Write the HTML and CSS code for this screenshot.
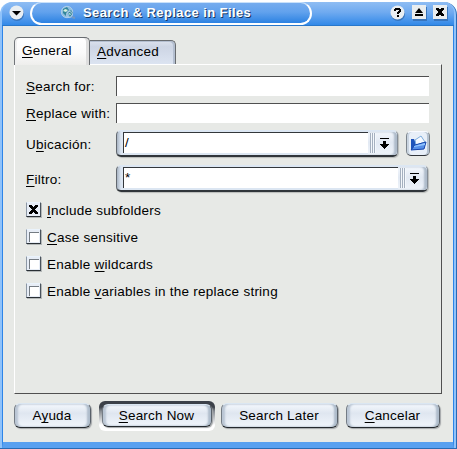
FILE: index.html
```html
<!DOCTYPE html>
<html lang="es">
<head>
<meta charset="utf-8">
<title>Search &amp; Replace in Files</title>
<link rel="stylesheet" href="styles.css">
</head>
<body>
<main class="window">
  <header class="titlebar">
    <svg class="round-button" width="16" height="17" viewBox="0 0 16 17"><circle cx="8" cy="9" r="7" fill="#3875bd"/><circle cx="7.5" cy="7.5" r="7" fill="#e9eef2"/><path d="M3 6h9L7.5 10.5z" fill="#000"/></svg>
    <div class="title-pill">
      <svg width="16" height="16" viewBox="0 0 16 16"><circle cx="7" cy="7" r="5.7" fill="#8bbce0" stroke="#aecfe9"/><path d="M3 4l4-2 2 3-2 2-1 4-3-3zM8 8l3-3 2 3-3 4z" fill="#32869b"/><path d="M3 6l2-2 3 1-2 2zM8 9l2-1 1 2" fill="#d8f2df"/><circle cx="9.5" cy="9.5" r="3" fill="none" stroke="#b2cce4"/><path d="M12 12l3 1" stroke="#7498c2" stroke-width="2"/></svg>
      <h1>Search &amp; Replace in Files</h1>
    </div>
    <div class="controls">
      <svg width="16" height="17" viewBox="0 0 16 17"><circle cx="8" cy="9" r="7" fill="#3875bd"/><circle cx="7.5" cy="7.5" r="7" fill="#e9eef2"/><path d="M4 6V4h1V3h5v1h1v3h-1v1H9v1H7V7h1V6h1V5H6v1zM7 10h2v2H7z" fill="#000"/></svg>
      <svg width="16" height="17" viewBox="0 0 16 17"><path d="M2 2h14v14H2z" fill="#3875bd"/><path d="M1 0h14v14H1z" fill="#e9edef"/><path d="M4 8l4-5 4 5zM4 9h8v2H4z" fill="#000"/></svg>
      <svg width="16" height="17" viewBox="0 0 16 17"><path d="M2 2h14v14H2z" fill="#3875bd"/><path d="M1 0h14v14H1z" fill="#e9edef"/><path d="M4 3h3v1h2V3h3v2h-1v1h-1v2h1v1h1v2H9v-1H7v1H4V9h1V8h1V6H5V5H4z" fill="#000"/></svg>
    </div>
  </header>
  <section class="content">
    <nav class="tabs">
      <span class="tab active"><u>G</u>eneral</span>
      <span class="tab"><u>A</u>dvanced</span>
    </nav>
    <div class="panel">
      <div class="row search"><label><u>S</u>earch for:</label><div class="field"></div></div>
      <div class="row replace"><label><u>R</u>eplace with:</label><div class="field"></div></div>
      <div class="row location">
        <label>U<u>b</u>icación:</label>
        <div class="combo"><div class="value">/</div><div class="drop"><i class="grip"></i><svg width="9" height="11" viewBox="0 0 9 11"><path d="M0 0h9v1H0zM3 3h3v3h3v1H8v1H7v1H6v1H5v1H4v-1H3V9H2V8H1V7H0V6h3z"/></svg></div></div>
        <div class="folder"><svg width="17" height="16" viewBox="0 0 17 16"><path d="M1 15V4h3l1 2h9v8z" fill="#1e54bb"/><path d="M5 5l6-4 4 6-9 3z" fill="#f5f9ff" stroke="#7daddd"/><path d="M1 15l4-5 11-3-2 7z" fill="#568fe9" stroke="#1646ad"/><path d="M4 11l11-3v2L4 12z" fill="#91c4ff"/></svg></div>
      </div>
      <div class="row filter">
        <label><u>F</u>iltro:</label>
        <div class="combo"><div class="value">*</div><div class="drop"><i class="grip"></i><svg width="9" height="11" viewBox="0 0 9 11"><path d="M0 0h9v1H0zM3 3h3v3h3v1H8v1H7v1H6v1H5v1H4v-1H3V9H2V8H1V7H0V6h3z"/></svg></div></div>
      </div>
      <div class="checks">
        <label class="check"><i class="box"><svg width="9" height="9" viewBox="0 0 9 9"><path d="M0 0h3v1h1v1h1V1h1V0h3v2H8v1H7v1H6v1h1v1h1v1h1v2H6V8H5V7H4v1H3v1H0V7h1V6h1V5h1V4H2V3H1V2H0z"/></svg></i><span><u>I</u>nclude subfolders</span></label>
        <label class="check"><i class="box empty"></i><span><u>C</u>ase sensitive</span></label>
        <label class="check"><i class="box empty"></i><span>Enable <u>w</u>ildcards</span></label>
        <label class="check"><i class="box empty"></i><span>Enable <u>v</u>ariables in the replace string</span></label>
      </div>
    </div>
    <footer class="actions">
      <button class="help-button">A<u>y</u>uda</button>
      <div class="default"><button><u>S</u>earch Now</button></div>
      <button class="later">Search Later</button>
      <button class="cancel"><u>C</u>ancelar</button>
    </footer>
  </section>
</main>
</body>
</html>
```
FILE: styles.css
```css
* { box-sizing: border-box; }
body {
  margin: 0; width: 457px; height: 449px; overflow: hidden; background: #fff;
  font: 13.5px/16px "Liberation Sans", sans-serif; letter-spacing: .25px; color: #000;
}
svg { display: block; flex: none; }
u { text-decoration-thickness: 1px; text-underline-offset: 2px; text-decoration-skip-ink: none; }
.window {
  width: 457px; height: 447px; margin-top: 2px; padding: 0 2px 0 2px;
  background: #8fc2fa; border-right: 1px solid #286bb4; border-bottom: 1px solid #286bb4;
  border-radius: 12px 13px 0 0;
}
.titlebar {
  height: 24px; display: flex; background: linear-gradient(#8fbdf3, #6faaf0 45%, #3289e8);
  border-bottom: 1px solid #2777cb; border-radius: 11px 11px 0 0;
}
.round-button { margin: 3px 0 0 7px; }
.title-pill {
  width: 282px; height: 23px; margin-left: 5px; padding: 2px 0 0 28px;
  display: flex; border: 2px solid #fff; border-top: 1px solid #c9e1fa; border-radius: 12px;
  background: linear-gradient(#76acee, #62a2ed 45%, #2c82e2);
}
h1 {
  margin: 1px 0 0 7px; font-size: 13px; line-height: 14px; letter-spacing: .4px;
  color: #fff; text-shadow: 1px 1px #17365d; white-space: nowrap;
}
.controls { display: flex; gap: 5px; margin: 3px 0 0 78px; }
.content {
  height: 422px; padding: 11px 11px 6px 11px;
  background: #e7e9e6; border-left: 1px solid #2c84e8; border-right: 1px solid #2c84e8;
  border-bottom: 6px solid #58a0f0;
}
.tabs { height: 27px; display: flex; align-items: flex-end; }
.tab {
  width: 86px; height: 24px; padding: 3px 0 0 7px; border: 1px solid #686c70; border-left: 0;
  border-bottom: 0; border-radius: 0 5px 0 0;
  background: linear-gradient(#dce2ed, #cdd5e4 25%, #dce4f1);
  box-shadow: inset -2px 1px #b4bfd0;
}
.tab.active {
  width: 76px; height: 28px; margin-bottom: -1px; padding: 5px 0 0 7px;
  border-left: 1px solid #72767a; border-radius: 5px 5px 0 0;
  background: linear-gradient(#fff, #fafafa 55%, #eeeeec);
  box-shadow: inset 2px 0 #f0f0f0, inset -3px 0 #dedede;
}
.panel {
  height: 330px; width: 428px; padding: 11px 11px 0; border: 1px solid #fff;
  border-right-color: #505050; border-bottom-color: #505050;
}
.row { display: flex; }
.row > label { width: 90px; flex: none; white-space: nowrap; }
.field { width: 313px; height: 20px; border: 1px solid #505050; border-right: 0; border-bottom: 0; background: #fff; }
.search { height: 27px; }
.replace { height: 26px; }
.search label, .replace label { padding-top: 3px; }
.location { height: 35px; }
.location label, .filter label { padding-top: 8px; }
.filter { height: 38px; }
.combo {
  width: 282px; height: 27px; margin-top: 1px; padding: 1px 0 0 6px; display: flex;
  border: 1px solid #62686f; border-top-color: #dce7f3; border-right-color: #848d97; border-bottom: 2px solid #30353a;
  border-radius: 5px; background: linear-gradient(90deg, #a8b4c3, #dce6f2 4px);
  box-shadow: 1px 1px 1px #b8bbb9;
}
.filter .combo { width: 312px; }
.value { flex: 1; height: 21px; padding-left: 1px; border-top: 1px solid #33373b; border-left: 1px solid #33373b; background: #fff; line-height: 20px; }
.drop {
  width: 29px; height: 23px; padding-left: 2px; display: flex; border-radius: 0 4px 4px 0;
  background: linear-gradient(#f3f7fc, #e2e9f3 45%, #eff4fa);
  box-shadow: inset -3px 0 2px #aebbca;
}
.grip { width: 6px; height: 20px; margin: 1px 4px 0 0; background: repeating-linear-gradient(90deg, #a5b0bf 0 1px, #f4f8fc 1px 2px); }
.drop > svg { margin-top: 6px; }
.folder {
  width: 24px; height: 25px; margin: 2px 0 0 8px; padding: 3px 0 0 3px; flex: none;
  border: 1px solid #7d858d; border-top-color: #f8faff; border-bottom-color: #303439;
  border-radius: 5px; background: #e8eff8; box-shadow: inset 2px 0 #cad5e1, inset -2px 0 #b6c3d1;
}
.check { display: flex; height: 27px; align-items: flex-start; white-space: nowrap; }
.check span { padding-top: 1px; }
.box {
  width: 15px; height: 15px; margin-right: 6px; padding: 2px; flex: none;
  border: 1px solid #8d98a5; border-top-color: #eaf3fc; border-right: 1px solid #4a535d; border-bottom: 1px solid #292f35;
  background: #e7edf6; box-shadow: 1px 1px #b4b8b8;
}
.empty::before { content: ""; display: block; width: 9px; height: 9px; background: #fff; border: 1px solid #747b82; border-right: 0; border-bottom: 0; }
.actions { display: flex; margin-top: 9px; align-items: flex-start; width: 428px; }
button {
  height: 25px; padding: 0 1px 0 0; font: inherit; letter-spacing: .2px; line-height: 16px; color: #000;
  border: 1px solid #747c85; border-top-color: #dae6f2; border-right-color: #59616a; border-bottom: 1px solid #24292e;
  border-radius: 6px; background: linear-gradient(#f4f8fd, #dfe6f0 40%, #f0f5fb);
  box-shadow: inset 3px 0 2px #bac6d4, inset -3px 0 2px #aebccb, 1px 1px 1px #a4a7a9;
}
.help-button { width: 77px; }
.default { width: 116px; height: 30px; margin: -2px 0 0 8px; padding: 3px; border-radius: 6px; background: linear-gradient(#3c4149 0 6px, #858a90 10px, #fff 24px); }
.default button { display: block; width: 110px; height: 23px; }
.later { width: 117px; margin-left: 6px; }
.cancel { width: 94px; margin-left: 8px; }
```
